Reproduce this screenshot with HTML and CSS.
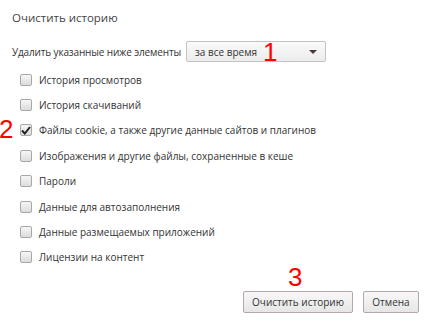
FILE: index.html
```html
<!DOCTYPE html>
<html lang="ru">
  <head>
    <meta charset="UTF-8" />
    <meta name="viewport" content="width=device-width, initial-scale=1.0" />
    <title>Очистить историю</title>
    <link rel="stylesheet" href="styles.css">
  </head>
  <body>
    <div class="dialog">
      <h1 class="title">Очистить историю</h1>

      <!-- Period selector -->
      <div class="period-row">
        <span class="period-label">Удалить указанные ниже элементы</span>
        <div class="select">
          <span>за все время</span>
          <span class="arrow"></span>
          <span class="mark mark-1">1</span>
        </div>
      </div>

      <!-- Items to clear -->
      <ul class="items">
        <li><span class="box"></span>История просмотров</li>
        <li><span class="box"></span>История скачиваний</li>
        <li>
          <span class="mark mark-2">2</span>
          <span class="box checked">
            <svg width="10" height="9" viewBox="0 0 10 9"><path d="M1 4.5 L3.8 7.5 L9 1" fill="none" stroke="#222" stroke-width="2"/></svg>
          </span>Файлы cookie, а также другие данные сайтов и плагинов
        </li>
        <li><span class="box"></span>Изображения и другие файлы, сохраненные в кеше</li>
        <li><span class="box"></span>Пароли</li>
        <li><span class="box"></span>Данные для автозаполнения</li>
        <li><span class="box"></span>Данные размещаемых приложений</li>
        <li><span class="box"></span>Лицензии на контент</li>
      </ul>

      <div class="actions">
        <button class="btn btn-main">Очистить историю<span class="mark mark-3">3</span></button>
        <button class="btn btn-cancel">Отмена</button>
      </div>
    </div>
  </body>
</html>
```

FILE: styles.css
```css
body {
  margin: 0;
  padding: 0;
  background: #fff;
  font-family: "Open Sans", "DejaVu Sans", sans-serif;
  font-size: 10px;
  color: #333;
}
.dialog {
  width: 434px;
  height: 322px;
  padding: 10px 12px 0 12px;
  box-sizing: border-box;
}
.title {
  margin: 0;
  font-size: 11.5px;
  font-weight: normal;
  color: #444;
  line-height: 16px;
}
.period-row {
  display: flex;
  align-items: center;
  gap: 5px;
  margin-top: 15px;
}
.period-label {
  letter-spacing: -0.15px;
}
.select {
  position: relative;
  width: 140px;
  height: 21px;
  box-sizing: border-box;
  border: 1px solid #c4c4c4;
  border-radius: 2px;
  background: linear-gradient(#fafafa, #ececec);
  display: flex;
  align-items: center;
  padding: 0 8px;
}
.select span:first-child {
  flex: 1;
}
.arrow {
  width: 0;
  height: 0;
  border-left: 4px solid transparent;
  border-right: 4px solid transparent;
  border-top: 4px solid #4a3440;
}
.mark {
  position: absolute;
  color: #f00;
  font-family: "Liberation Sans", Arial, sans-serif;
  font-size: 26px;
  line-height: 26px;
}
.mark-1 {
  left: 76px;
  top: -3px;
}
.items {
  list-style: none;
  margin: 5px 0 0 0;
  padding: 0 0 0 8px;
}
.items li {
  position: relative;
  display: flex;
  align-items: center;
  height: 25.4px;
}
.mark-2 {
  left: -21px;
  top: -2px;
}
.box {
  width: 12px;
  height: 12px;
  box-sizing: border-box;
  border: 1px solid #a8a8a8;
  border-radius: 2px;
  background: linear-gradient(#f6f6f6, #dcdcdc);
  margin-right: 7px;
  display: flex;
  align-items: center;
  justify-content: center;
}
.actions {
  display: flex;
  justify-content: flex-end;
  gap: 10px;
  margin-top: 21px;
  padding-right: 3px;
}
.btn {
  position: relative;
  height: 22px;
  padding: 0;
  white-space: nowrap;
  font-family: inherit;
  font-size: 10px;
  color: #333;
  border: 1px solid #b5a8ad;
  border-radius: 2px;
  background: linear-gradient(#f8f8f8, #e6e6e6);
}
.btn-main {
  width: 110px;
}
.btn-cancel {
  width: 56px;
}
.mark-3 {
  left: 44px;
  top: -28px;
}
```
